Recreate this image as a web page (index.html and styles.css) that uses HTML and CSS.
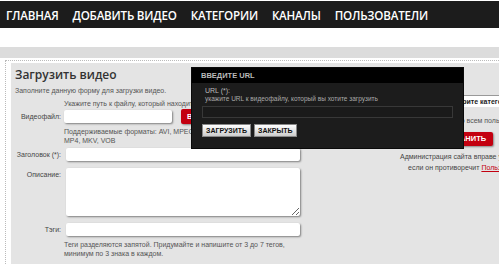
FILE: index.html
```html
<!DOCTYPE html>
<html lang="ru">
<head>
    <meta charset="UTF-8">
    <title>Загрузить видео</title>
    <link rel="stylesheet" href="styles.css">
</head>
<body>
    <nav class="topnav">
        <a href="#">ГЛАВНАЯ</a>
        <a href="#">ДОБАВИТЬ ВИДЕО</a>
        <a href="#">КАТЕГОРИИ</a>
        <a href="#">КАНАЛЫ</a>
        <a href="#">ПОЛЬЗОВАТЕЛИ</a>
    </nav>

    <div class="strip"></div>

    <div class="wrap">
        <div class="panel">
            <form class="form-col">
                <h1>Загрузить видео</h1>
                <p class="intro">Заполните данную форму для загрузки видео.</p>

                <div class="row">
                    <span></span>
                    <p class="hint">Укажите путь к файлу, который находится на вашем компьютере</p>
                </div>
                <div class="row">
                    <label>Видеофайл:</label>
                    <div class="file-line">
                        <input class="field small" type="text">
                        <span class="btn-red">ВЫБРАТЬ</span>
                    </div>
                </div>
                <div class="row">
                    <span></span>
                    <p class="hint">Поддерживаемые форматы: AVI, MPEG,<br>MP4, MKV, VOB</p>
                </div>
                <div class="row gap first">
                    <label>Заголовок (*):</label>
                    <input class="field wide" type="text">
                </div>
                <div class="row gap top">
                    <label>Описание:</label>
                    <textarea class="field wide area"></textarea>
                </div>
                <div class="row gap">
                    <label>Тэги:</label>
                    <input class="field wide" type="text">
                </div>
                <div class="row">
                    <span></span>
                    <p class="hint tags">Теги разделяются запятой. Придумайте и напишите от 3 до 7 тегов,<br>минимум по 3 знака в каждом.</p>
                </div>
            </form>

            <div class="side-col">
                <div class="select">Выберите категорию</div>
                <p class="side-note">Доступно всем пользователям</p>
                <span class="btn-red save">СОХРАНИТЬ</span>
                <p class="rules">Администрация сайта вправе удалить видео,</p>
                <p class="rules second">если он противоречит <a href="#">Пользовательскому соглашению</a></p>
            </div>
        </div>
    </div>

    <div class="dialog">
        <div class="dialog-head">ВВЕДИТЕ URL</div>
        <div class="dialog-body">
            <p class="d-label">URL (*):</p>
            <p class="d-hint">укажите URL к видеофайлу, который вы хотите загрузить</p>
            <div class="d-input"></div>
            <div class="d-buttons">
                <span class="btn-grey">ЗАГРУЗИТЬ</span>
                <span class="btn-grey">ЗАКРЫТЬ</span>
            </div>
        </div>
    </div>
</body>
</html>
```

FILE: styles.css
```css
html {
    overflow: hidden;
}

body {
    margin: 0;
    padding: 0;
    background-color: #fff;
    font-family: "Liberation Sans", Arial, sans-serif;
    font-size: 7px;
    color: #555;
    width: 499px;
    height: 267px;
    position: relative;
    overflow: hidden;
}

p {
    margin: 0;
}

.topnav {
    margin-top: 1px;
    height: 27px;
    background-color: #1c1c1c;
    display: flex;
    align-items: center;
    gap: 14px;
    padding: 2px 0 0 6px;
    box-sizing: border-box;
}

.topnav a {
    color: #fff;
    text-decoration: none;
    font-family: "Open Sans", sans-serif;
    font-weight: 600;
    font-size: 11.6px;
    letter-spacing: -0.2px;
}

.strip {
    margin-top: 19px;
    height: 11px;
    background-color: #dcdcdc;
}

.wrap {
    margin: 2px 0 0 5px;
    border-top: 1px dotted #bbb;
    border-left: 1px dotted #bbb;
    padding: 2px 0 0 5px;
}

.panel {
    background-color: #e4e4e4;
    height: 201px;
    display: flex;
    align-items: flex-start;
}

/* left column with the form */
.form-col {
    width: 300px;
    flex-shrink: 0;
    margin: 0;
    padding: 5px 0 0 0;
}

h1 {
    margin: 0 0 0 4px;
    font-family: "Open Sans", sans-serif;
    font-size: 12px;
    font-weight: 600;
    color: #333;
    line-height: 14px;
}

.intro {
    margin: 4px 0 0 4px;
    line-height: 10px;
}

.row {
    display: grid;
    grid-template-columns: 50px 1fr;
    column-gap: 3px;
    align-items: center;
}

.row.top {
    align-items: start;
    grid-template-rows: 48px;
}

.row label {
    text-align: right;
    color: #444;
}

.row.top label {
    padding-top: 3px;
}

.row.gap {
    margin-top: 7px;
    column-gap: 5px;
}

.row.gap.first {
    margin-top: 2px;
}

.hint {
    line-height: 9.5px;
    margin-top: 3px;
}

.hint.tags {
    margin-top: 4px;
}

.file-line {
    display: flex;
    align-items: center;
    gap: 9px;
}

.field {
    display: block;
    box-sizing: border-box;
    margin: 0;
    padding: 0;
    border: none;
    background-color: #fff;
    height: 13px;
    border-radius: 2px;
    box-shadow: 1px 1px 2px rgba(0, 0, 0, 0.45);
}

.field.small {
    width: 108px;
}

.field.wide {
    width: 234px;
}

textarea.field.area {
    height: 48px;
    resize: both;
}

.btn-red {
    display: inline-block;
    background-color: #c30010;
    color: #fff;
    font-weight: bold;
    font-size: 7.5px;
    padding: 3px 6px;
    border-radius: 2px;
    box-shadow: 1px 1px 2px rgba(0, 0, 0, 0.4);
}

/* right column, mostly hidden behind the dialog */
.side-col {
    margin-left: 89px;
    width: 220px;
    flex-shrink: 0;
    padding-top: 32px;
    white-space: nowrap;
}

.select {
    margin-left: 38px;
    height: 12px;
    background-color: #fff;
    border-top: 1px solid #999;
    box-sizing: border-box;
    color: #222;
    font-weight: bold;
    padding-left: 5px;
    line-height: 11px;
}

.side-note {
    margin: 9px 0 0 34px;
    line-height: 10px;
}

.save {
    margin: 6px 0 0 33px;
    display: block;
    width: 60px;
    text-align: center;
    padding: 3px 0;
    line-height: 8px;
    font-size: 7.5px;
}

.rules {
    margin-top: 5px;
    line-height: 11px;
    color: #444;
}

.rules.second {
    margin: 0 0 0 8px;
}

.rules a {
    color: #c30010;
}

/* url dialog */
.dialog {
    position: absolute;
    left: 191px;
    top: 67px;
    width: 273px;
    height: 82px;
    background-color: #1c1c1c;
    box-sizing: border-box;
    border: 1px solid #0a0a0a;
}

.dialog-head {
    height: 15px;
    background-color: #000;
    color: #bbb;
    font-weight: bold;
    font-size: 7.5px;
    line-height: 15px;
    padding-left: 9px;
}

.dialog-body {
    padding: 3px 10px 0 10px;
}

.d-label {
    color: #bbb;
    padding-left: 3px;
    line-height: 9px;
}

.d-hint {
    color: #aaa;
    font-size: 6.5px;
    padding-left: 3px;
    line-height: 8px;
}

.d-input {
    margin-top: 3px;
    height: 10px;
    border: 1px solid #383838;
    background-color: #1a1a1a;
}

.d-buttons {
    display: flex;
    gap: 3px;
    margin-top: 6px;
}

.btn-grey {
    background: linear-gradient(#fff, #ccc);
    color: #111;
    font-weight: bold;
    font-size: 7px;
    line-height: 9px;
    padding: 1px 3px;
    border: 1px solid #888;
}
```
